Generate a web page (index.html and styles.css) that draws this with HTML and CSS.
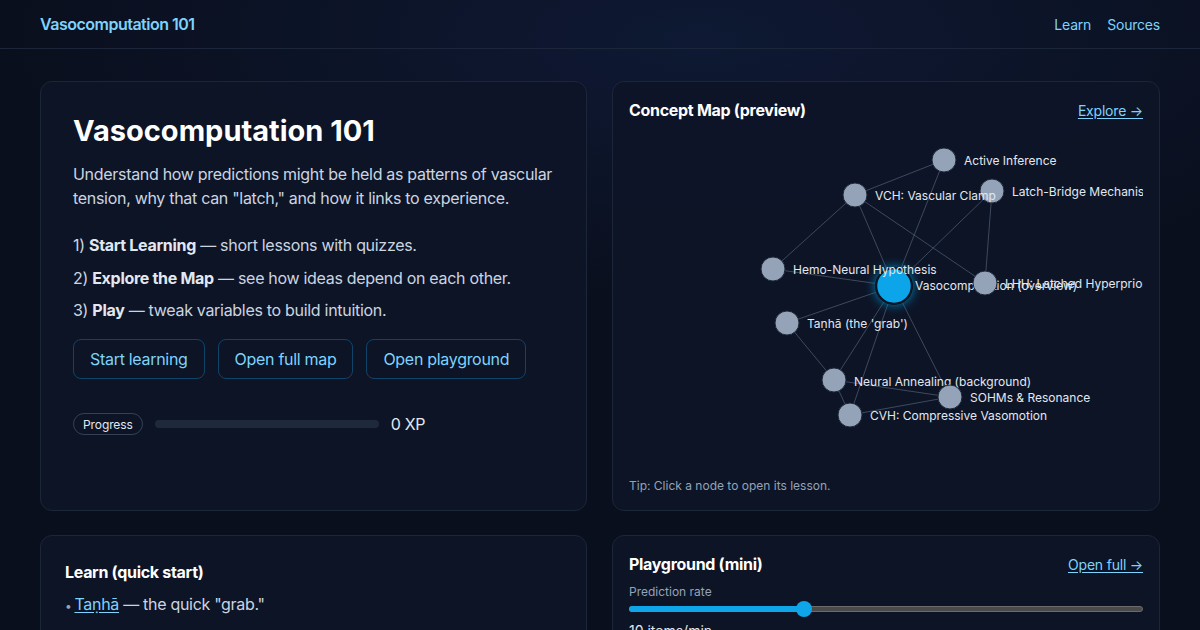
FILE: index.html
```html
<!DOCTYPE html>
<html lang="en">
<head>
<meta charset="utf-8">
<title>Vasocomputation 101</title>
<link rel="stylesheet" href="styles.css">
</head>
<body>
<header class="topbar">
  <a class="brand" href="#">Vasocomputation 101</a>
  <nav class="nav">
    <a href="#">Learn</a>
    <a href="#">Sources</a>
  </nav>
</header>
<main class="main">
  <section class="card hero">
    <h1 class="hero-title">Vasocomputation 101</h1>
    <p class="hero-lead">Understand how predictions might be held as patterns of vascular tension, why that can "latch," and how it links to experience.</p>
    <ol class="steps">
      <li>1) <b>Start Learning</b> — short lessons with quizzes.</li>
      <li>2) <b>Explore the Map</b> — see how ideas depend on each other.</li>
      <li>3) <b>Play</b> — tweak variables to build intuition.</li>
    </ol>
    <div class="actions">
      <a class="btn" href="#">Start learning</a>
      <a class="btn" href="#">Open full map</a>
      <a class="btn" href="#">Open playground</a>
    </div>
    <div class="progress">
      <span class="pill">Progress</span>
      <span class="bar"><span class="bar-fill" style="width:0%"></span></span>
      <span class="xp">0 XP</span>
    </div>
  </section>

  <section class="card panel">
    <div class="panel-head">
      <h2 class="panel-title">Concept Map (preview)</h2>
      <a class="more" href="#">Explore →</a>
    </div>
    <svg class="map" width="514" height="340" viewBox="0 0 514 340">
      <defs>
        <filter id="glow" x="-100%" y="-100%" width="300%" height="300%">
          <feGaussianBlur stdDeviation="6" result="b"/>
          <feMerge><feMergeNode in="b"/><feMergeNode in="SourceGraphic"/></feMerge>
        </filter>
      </defs>
      <g class="edges">
        <line x1="315" y1="30" x2="226" y2="65"/>
        <line x1="315" y1="30" x2="265" y2="156"/>
        <line x1="226" y1="65" x2="144" y2="139"/>
        <line x1="226" y1="65" x2="265" y2="156"/>
        <line x1="226" y1="65" x2="356" y2="153"/>
        <line x1="363" y1="61" x2="265" y2="156"/>
        <line x1="363" y1="61" x2="356" y2="153"/>
        <line x1="144" y1="139" x2="265" y2="156"/>
        <line x1="265" y1="156" x2="158" y2="193"/>
        <line x1="265" y1="156" x2="205" y2="250"/>
        <line x1="265" y1="156" x2="221" y2="285"/>
        <line x1="265" y1="156" x2="321" y2="267"/>
        <line x1="158" y1="193" x2="205" y2="250"/>
        <line x1="205" y1="250" x2="221" y2="285"/>
        <line x1="205" y1="250" x2="321" y2="267"/>
        <line x1="221" y1="285" x2="321" y2="267"/>
      </g>
      <g class="node"><circle cx="363" cy="61" r="12"/><text x="383" y="61">Latch-Bridge Mechanism</text></g>
      <g class="node"><circle cx="226" cy="65" r="12"/><text x="246" y="65">VCH: Vascular Clamp</text></g>
      <g class="node"><circle cx="315" cy="30" r="12"/><text x="335" y="30">Active Inference</text></g>
      <g class="node main-node"><circle cx="265" cy="156" r="18" filter="url(#glow)"/><text x="286" y="155">Vasocomputation (overview)</text></g>
      <g class="node"><circle cx="144" cy="139" r="12"/><text x="164" y="139">Hemo-Neural Hypothesis</text></g>
      <g class="node"><circle cx="356" cy="153" r="12"/><text x="376" y="153">LHH: Latched Hyperprior</text></g>
      <g class="node"><circle cx="158" cy="193" r="12"/><text x="178" y="193">Taṇhā (the 'grab')</text></g>
      <g class="node"><circle cx="205" cy="250" r="12"/><text x="225" y="251">Neural Annealing (background)</text></g>
      <g class="node"><circle cx="321" cy="267" r="12"/><text x="341" y="267">SOHMs &amp; Resonance</text></g>
      <g class="node"><circle cx="221" cy="285" r="12"/><text x="241" y="285">CVH: Compressive Vasomotion</text></g>
    </svg>
    <p class="tip">Tip: Click a node to open its lesson.</p>
  </section>

  <section class="card learn">
    <h2 class="panel-title">Learn (quick start)</h2>
    <ul class="lessons">
      <li><a href="#">Taṇhā</a> — the quick "grab."</li>
      <li><a href="#">Vasocomputation</a> — predictions as vascular tension.</li>
    </ul>
  </section>

  <section class="card panel play">
    <div class="panel-head">
      <h2 class="panel-title">Playground (mini)</h2>
      <a class="more" href="#">Open full →</a>
    </div>
    <div class="field-label">Prediction rate</div>
    <div class="slider">
      <span class="slider-fill" style="width:34%"></span>
      <span class="slider-thumb" style="left:34%"></span>
    </div>
    <div class="readout">10 items/min</div>
  </section>
</main>
</body>
</html>
```

FILE: styles.css
```css
* { box-sizing: border-box; }
html, body { margin: 0; padding: 0; }
body {
  font-family: Inter, "Noto Sans", "Liberation Sans", sans-serif;
  color: #e2e8f0;
  background-color: #0a0f1d;
  background-image: radial-gradient(ellipse 700px 260px at 700px 40px, rgba(30, 64, 140, 0.2), rgba(10, 15, 29, 0) 100%);
  width: 1200px;
  height: 630px;
  overflow: hidden;
}
a { color: #7dd3fc; text-decoration: none; }

.topbar {
  height: 49px;
  padding: 0 40px;
  display: flex;
  align-items: center;
  justify-content: space-between;
  border-bottom: 1px solid #1b263a;
}
.brand { font-size: 16px; font-weight: 600; color: #7dd3fc; letter-spacing: -0.5px; }
.nav { display: flex; gap: 16px; font-size: 14px; letter-spacing: -0.2px; }
.nav a { color: #7dd3fc; }

.main {
  padding: 32px 40px 0;
  display: grid;
  grid-template-columns: 1fr 1fr;
  column-gap: 25px;
  row-gap: 24px;
}

.card {
  border: 1px solid #1c2639;
  border-radius: 12px;
  background: rgba(14, 21, 39, 0.92);
}

.hero { padding: 32px; display: flex; flex-direction: column; letter-spacing: -0.3px; }
.hero-title { margin: 0; font-size: 29px; line-height: 34px; font-weight: 700; color: #ffffff; letter-spacing: 0; }
.hero-lead { margin: 14px 0 0; font-size: 16px; line-height: 24px; color: #cbd5e1; }
.steps { list-style: none; margin: 23px 0 0; padding: 0; font-size: 16px; line-height: 24px; color: #cbd5e1; }
.steps li + li { margin-top: 8.5px; }
.steps b { color: #e2e8f0; font-weight: 700; }

.actions { display: flex; gap: 13px; margin-top: 17px; }
.btn {
  height: 40px;
  display: flex;
  align-items: center;
  padding: 0 16px;
  border: 1px solid #0f4468;
  border-radius: 8px;
  font-size: 16px;
  color: #7dd3fc;
}

.progress { display: flex; align-items: center; margin-top: 34px; }
.pill {
  height: 22px;
  padding: 0 9px;
  display: flex;
  align-items: center;
  border: 1px solid #334155;
  border-radius: 999px;
  font-size: 12px;
  color: #e2e8f0;
  letter-spacing: -0.1px;
}
.bar { margin-left: 12px; width: 224px; height: 8px; border-radius: 999px; background: #1e293b; display: block; overflow: hidden; }
.bar-fill { display: block; height: 100%; background: #0ea5e9; }
.xp { margin-left: 12px; font-size: 16px; color: #e2e8f0; }

.panel { padding: 16px; display: flex; flex-direction: column; }
.panel-head { display: flex; justify-content: space-between; align-items: center; height: 24px; }
.panel-title { margin: 0; font-size: 16px; line-height: 24px; font-weight: 700; color: #ffffff; letter-spacing: -0.3px; }
.more { font-size: 14px; color: #7dd3fc; text-decoration: underline; text-underline-offset: 2px; letter-spacing: -0.2px; }

.map { display: block; margin-top: 8px; overflow: hidden; }
.edges line { stroke: #64748b; stroke-opacity: 0.55; stroke-width: 1; }
.node circle { fill: #94a3b8; stroke: #1e293b; stroke-width: 1; }
.node text { font-size: 12px; fill: #e2e8f0; dominant-baseline: central; font-family: Inter, "Noto Sans", "Liberation Sans", sans-serif; }
.main-node circle { fill: #0ea5e9; stroke: #0b1222; stroke-width: 2.5; }

.tip { margin: 8px 0 0; font-size: 12px; line-height: 16px; color: #94a3b8; }

.learn { padding: 24px; height: 140px; }
.lessons { list-style: none; margin: 8px 0 0; padding: 0; font-size: 16px; line-height: 24px; color: #cbd5e1; letter-spacing: -0.3px; }
.lessons li { margin-bottom: 8px; }
.lessons li::before { content: "•"; color: #94a3b8; margin-right: 3px; font-size: 12px; }
.lessons a { text-decoration: underline; text-underline-offset: 2px; }

.play { height: 140px; }
.field-label { margin-top: 8px; font-size: 12px; line-height: 16px; color: #94a3b8; }
.slider {
  position: relative;
  margin-top: 6px;
  height: 6px;
  border-radius: 999px;
  background: #4a4a4a;
  border: 1px solid #6b6b6b;
}
.slider-fill { position: absolute; left: -1px; top: -1px; bottom: -1px; border-radius: 999px; background: #0ea5e9; }
.slider-thumb { position: absolute; top: 50%; width: 16px; height: 16px; margin: -8px 0 0 -8px; border-radius: 50%; background: #0ea5e9; }
.readout { margin-top: 10px; font-size: 14px; color: #e2e8f0; }
```
